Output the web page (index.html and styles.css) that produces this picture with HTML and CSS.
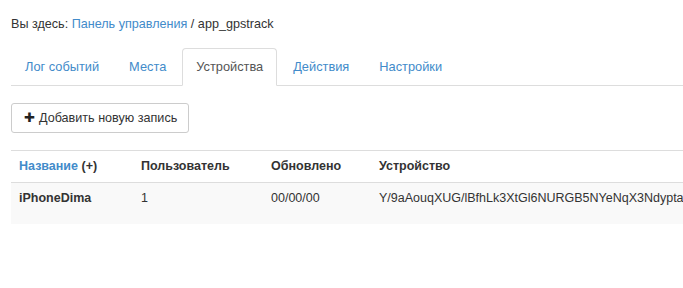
FILE: index.html
```html
<!DOCTYPE html>
<html>
  <head>
    <meta charset="UTF-8" />
    <title>app_gpstrack</title>
    <link rel="stylesheet" href="styles.css">
  </head>
  <body>
    <!-- хлебные крошки -->
    <div class="breadcrumb">
      Вы здесь: <a href="#">Панель управления</a> / app_gpstrack
    </div>

    <!-- вкладки -->
    <ul class="nav-tabs">
      <li><a href="#">Лог событий</a></li>
      <li><a href="#">Места</a></li>
      <li class="active"><a href="#">Устройства</a></li>
      <li><a href="#">Действия</a></li>
      <li><a href="#">Настройки</a></li>
    </ul>

    <div class="toolbar">
      <button class="btn"><span class="plus">✚</span>Добавить новую запись</button>
    </div>

    <!-- таблица устройств -->
    <div class="table-wrap">
      <table class="devices">
        <thead>
          <tr>
            <th class="col-name"><a href="#">Название</a> (+)</th>
            <th class="col-user">Пользователь</th>
            <th class="col-date">Обновлено</th>
            <th>Устройство</th>
          </tr>
        </thead>
        <tbody>
          <tr>
            <td><b>iPhoneDima</b></td>
            <td>1</td>
            <td>00/00/00</td>
            <td>Y/9aAouqXUG/lBfhLk3XtGl6NURGB5NYeNqX3NdyptaQ2kLmW8s</td>
          </tr>
        </tbody>
      </table>
    </div>
  </body>
</html>
```

FILE: styles.css
```css
body {
  margin: 0;
  padding: 0 0 0 11px;
  font-family: "Liberation Sans", Arial, sans-serif;
  font-size: 12.6px;
  line-height: 18px;
  color: #333;
  background: #fff;
  overflow: hidden;
}

a {
  color: #428bca;
  text-decoration: none;
}

/* хлебные крошки */
.breadcrumb {
  padding: 15px 0 0 0;
  height: 48px;
  box-sizing: border-box;
}

/* вкладки */
.nav-tabs {
  list-style: none;
  margin: 0;
  padding: 0;
  display: flex;
  border-bottom: 1px solid #ddd;
  font-size: 12.8px;
}
.nav-tabs li {
  margin-right: 2px;
  margin-bottom: -1px;
}
.nav-tabs a {
  display: block;
  padding: 9px 13px 9px 13px;
  border: 1px solid transparent;
  border-radius: 4px 4px 0 0;
}
.nav-tabs .active a {
  color: #555;
  background: #fff;
  border-color: #ddd #ddd transparent;
}

/* кнопка */
.toolbar {
  padding-top: 17px;
  height: 64px;
  box-sizing: border-box;
}
.btn {
  font-family: inherit;
  font-size: 12.6px;
  line-height: 17px;
  color: #333;
  background: #fff;
  border: 1px solid #ccc;
  border-radius: 3px;
  padding: 5px 11px 5px 12px;
  height: 30px;
  cursor: pointer;
}
.plus {
  font-size: 13px;
  margin-right: 4px;
  color: #222;
}

/* таблица */
.table-wrap {
  width: 800px;
}
.devices {
  border-collapse: collapse;
  white-space: nowrap;
  font-size: 12.5px;
}
.devices th,
.devices td {
  padding: 7px 8px;
  text-align: left;
  vertical-align: top;
  border-top: 1px solid #ddd;
}
.devices th {
  font-weight: bold;
  border-bottom: 1px solid #ddd;
  padding-top: 6px;
}
.devices tbody tr {
  background: #f9f9f9;
  height: 41px;
}
.devices td {
  padding-top: 6px;
}
.col-name {
  width: 106px;
}
.col-user {
  width: 114px;
}
.col-date {
  width: 92px;
}
```
